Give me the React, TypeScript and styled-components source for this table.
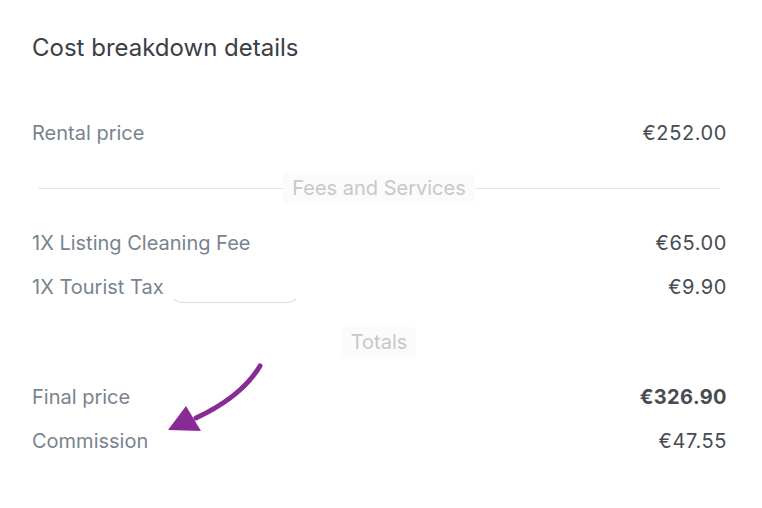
import React from 'react'
import styled, { createGlobalStyle } from 'styled-components'

const GlobalStyle = createGlobalStyle`
    body {
        margin: 0;
        background: #ffffff;
        font-family: Inter, "Liberation Sans", sans-serif;
    }
`

const StyledBreakdown = styled.div`
    position: relative;
    padding: 31px 35px 40px 32px;
`

const Title = styled.h2`
    margin: 0 0 46px;
    font-size: 24px;
    line-height: 34px;
    font-weight: 400;
    color: #3b4046;
`

const Row = styled.div`
    display: flex;
    align-items: center;
    justify-content: space-between;
    height: 44px;
`

const Label = styled.span`
    display: flex;
    align-items: center;
    font-size: 20px;
    color: #778490;
`

const Amount = styled.span<{ $bold?: boolean }>`
    font-size: 20px;
    letter-spacing: ${(p) => (p.$bold ? 0.4 : 0.6)}px;
    font-weight: ${(p) => (p.$bold ? 700 : 400)};
    color: #474c52;
`

const Divider = styled.div<{ $lined?: boolean }>`
    display: flex;
    align-items: center;
    height: 66px;
    margin: 0 7px 0 6px;

    &::before,
    &::after {
        content: '';
        flex: 1;
        height: 1px;
        background: ${(p) => (p.$lined ? '#e4e5e6' : 'transparent')};
    }
`

const DividerText = styled.span`
    padding: 3px 9px;
    font-size: 20px;
    color: #c6c8ca;
    background: #fbfbfb;
    border-radius: 4px;
`

const RedactedPill = styled.span`
    display: inline-block;
    width: 128px;
    height: 24px;
    margin-left: 6px;
    margin-top: 6px;
    border-radius: 14px;
    border: 1px solid transparent;
    border-bottom-color: #d8dadc;
    background: #ffffff;
`

const Arrow = styled.svg`
    position: absolute;
    left: 160px;
    top: 360px;
`

export default function App() {
    return (
        <>
            <GlobalStyle />
            <StyledBreakdown>
                <Title>Cost breakdown details</Title>
                <Row>
                    <Label>Rental price</Label>
                    <Amount>€252.00</Amount>
                </Row>
                <Divider $lined>
                    <DividerText>Fees and Services</DividerText>
                </Divider>
                <Row>
                    <Label>1X Listing Cleaning Fee</Label>
                    <Amount>€65.00</Amount>
                </Row>
                <Row>
                    <Label>1X Tourist Tax<RedactedPill /></Label>
                    <Amount>€9.90</Amount>
                </Row>
                <Divider>
                    <DividerText>Totals</DividerText>
                </Divider>
                <Row>
                    <Label>Final price</Label>
                    <Amount $bold>€326.90</Amount>
                </Row>
                <Row>
                    <Label>Commission</Label>
                    <Amount>€47.55</Amount>
                </Row>
                <Arrow width="110" height="80" viewBox="0 0 110 80">
                    <path d="M100 6 C 88 26, 66 44, 36 58" fill="none" stroke="#8a2b95" strokeWidth="5" strokeLinecap="round" />
                    <polygon points="8,70 26,46 41,71" fill="#8a2b95" />
                </Arrow>
            </StyledBreakdown>
        </>
    )
}
